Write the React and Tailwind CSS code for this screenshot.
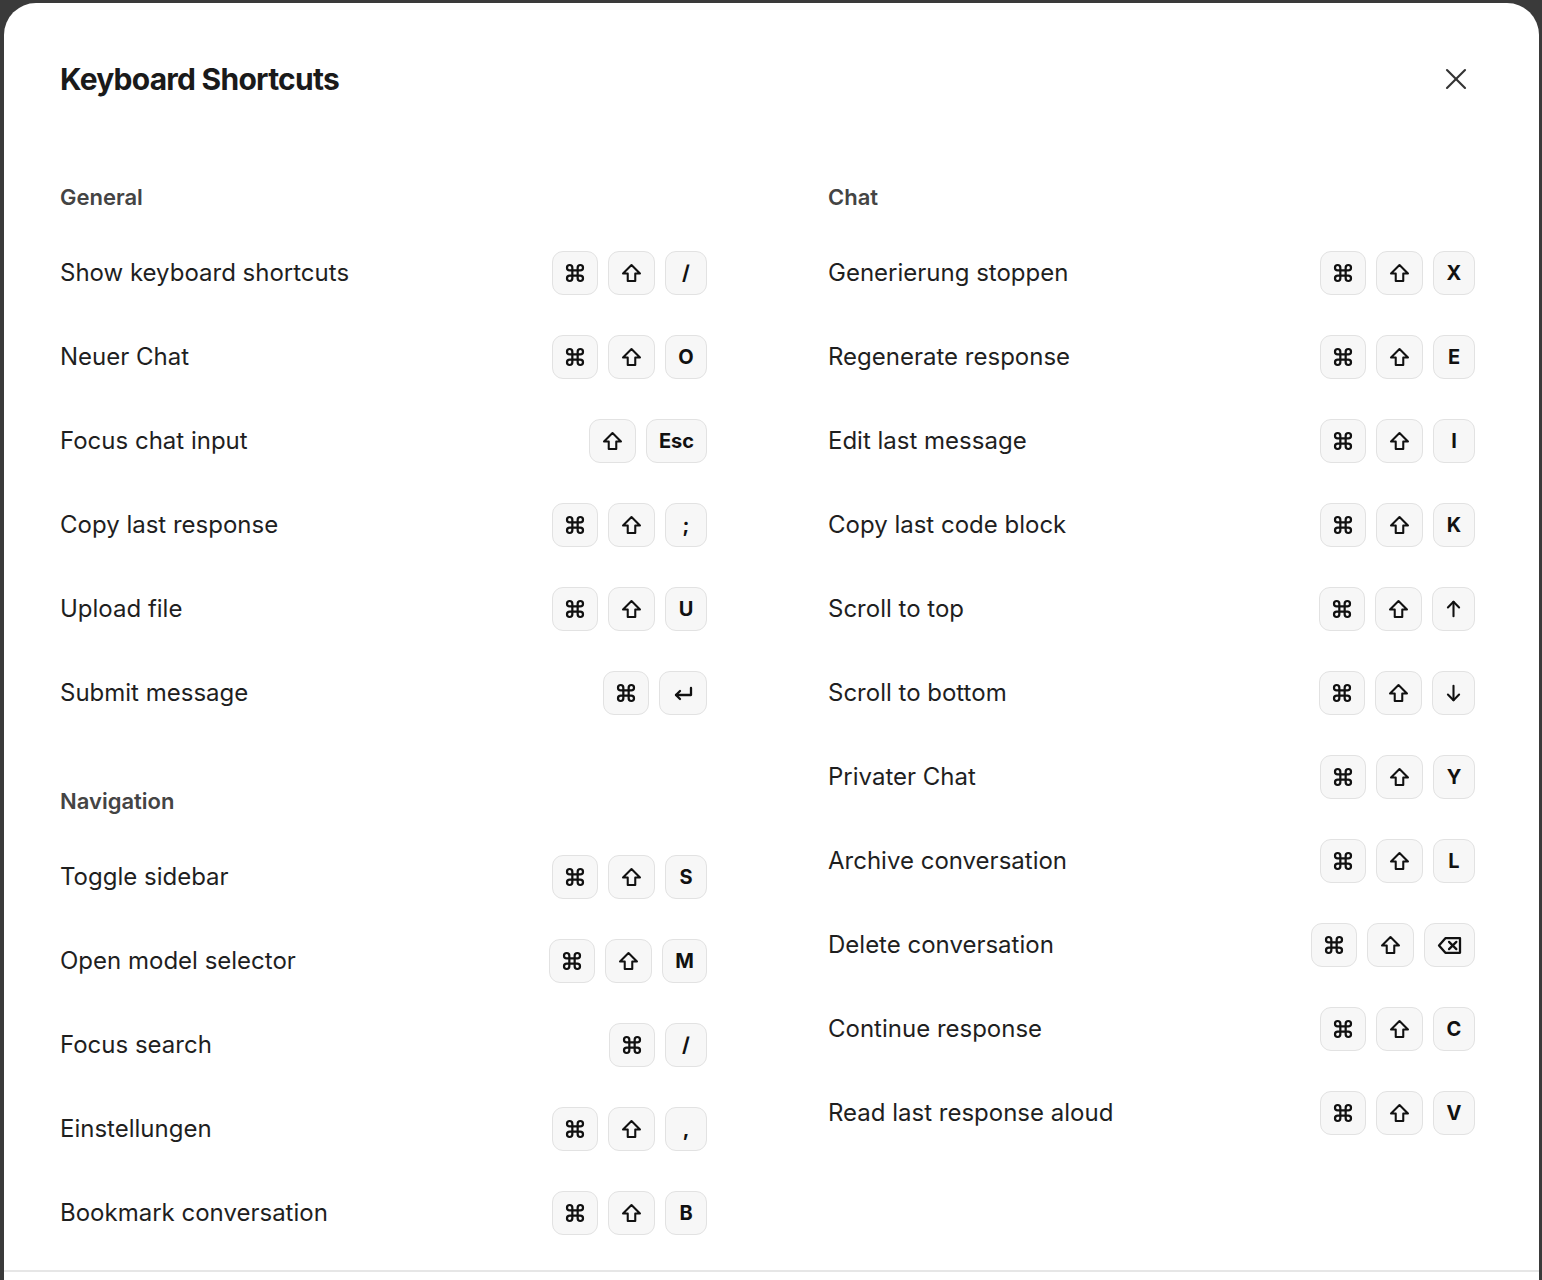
import { X } from 'lucide-react';

const CMD = 'cmd';
const SHIFT = 'shift';

const general = [
  ['Show keyboard shortcuts', [CMD, SHIFT, '/']],
  ['Neuer Chat', [CMD, SHIFT, 'O']],
  ['Focus chat input', [SHIFT, 'Esc']],
  ['Copy last response', [CMD, SHIFT, ';']],
  ['Upload file', [CMD, SHIFT, 'U']],
  ['Submit message', [CMD, 'enter']],
];

const navigation = [
  ['Toggle sidebar', [CMD, SHIFT, 'S']],
  ['Open model selector', [CMD, SHIFT, 'M']],
  ['Focus search', [CMD, '/']],
  ['Einstellungen', [CMD, SHIFT, ',']],
  ['Bookmark conversation', [CMD, SHIFT, 'B']],
];

const chat = [
  ['Generierung stoppen', [CMD, SHIFT, 'X']],
  ['Regenerate response', [CMD, SHIFT, 'E']],
  ['Edit last message', [CMD, SHIFT, 'I']],
  ['Copy last code block', [CMD, SHIFT, 'K']],
  ['Scroll to top', [CMD, SHIFT, 'up']],
  ['Scroll to bottom', [CMD, SHIFT, 'down']],
  ['Privater Chat', [CMD, SHIFT, 'Y']],
  ['Archive conversation', [CMD, SHIFT, 'L']],
  ['Delete conversation', [CMD, SHIFT, 'backspace']],
  ['Continue response', [CMD, SHIFT, 'C']],
  ['Read last response aloud', [CMD, SHIFT, 'V']],
];

const stroke = {
  fill: 'none',
  stroke: '#111',
  strokeLinecap: 'round',
  strokeLinejoin: 'round',
  overflow: 'visible',
};

// drawn modifier / special key glyphs
const glyphs = {
  cmd: (
    <svg width="16" height="16" viewBox="3 3 18 18" {...stroke} strokeWidth={2.5}>
      <path d="M9 6v12a3 3 0 1 1-3-3h12a3 3 0 1 1-3 3V6a3 3 0 1 1 3 3H6a3 3 0 1 1 3-3z" />
    </svg>
  ),
  shift: (
    <svg width="17" height="16" viewBox="3 3 18 17" {...stroke} strokeWidth={2.2}>
      <path d="M12 3 3 12h5v8h8v-8h5z" />
    </svg>
  ),
  enter: (
    <svg width="18" height="13" viewBox="3 5 18 13" {...stroke} strokeWidth={2.3}>
      <path d="M20 6v7H5" />
      <path d="m9 9-4 4 4 4" />
    </svg>
  ),
  up: (
    <svg width="13" height="16" viewBox="2 2 16 20" {...stroke} strokeWidth={2.6}>
      <path d="M10 21V3" />
      <path d="m3 10 7-7 7 7" />
    </svg>
  ),
  down: (
    <svg width="13" height="16" viewBox="2 2 16 20" {...stroke} strokeWidth={2.6}>
      <path d="M10 3v18" />
      <path d="m3 14 7 7 7-7" />
    </svg>
  ),
  backspace: (
    <svg width="21" height="15" viewBox="2 2 23 16" {...stroke} strokeWidth={2.5}>
      <path d="M9 2h16v16H9L2 10z" />
      <path d="m13 6 8 8M21 6l-8 8" />
    </svg>
  ),
};

function Key({ k }) {
  const glyph = glyphs[k];
  return (
    <kbd
      className={`flex h-[44px] min-w-[42px] items-center justify-center rounded-[11px] border-[1.5px] border-[#e2e2e2] bg-[#f7f7f7] font-[Inter,sans-serif] text-[#111] ${
        glyph ? 'px-[14px]' : 'px-[12px]'
      }`}
    >
      {glyph || <span className="text-[20px] leading-none font-bold">{k}</span>}
    </kbd>
  );
}

function Row({ label, keys }) {
  return (
    <div className="flex h-[84px] items-center justify-between">
      <span className="text-[24px] text-[#1f1f1f]">{label}</span>
      <div className="flex gap-[10px]">
        {keys.map((k, i) => (
          <Key key={i} k={k} />
        ))}
      </div>
    </div>
  );
}

function Section({ title, items }) {
  return (
    <section>
      <h3 className="mb-[20px] h-[28px] text-[22px] leading-[28px] font-semibold text-[#444]">{title}</h3>
      {items.map(([label, keys]) => (
        <Row key={label} label={label} keys={keys} />
      ))}
    </section>
  );
}

export default function App() {
  return (
    <div className="h-[1280px] overflow-hidden bg-[#3a3a3a] pt-[3px] pr-[3px] pl-[4px] font-[Inter,sans-serif]">
      <div className="flex h-[1300px] flex-col rounded-t-[32px] bg-white">
        <header className="flex items-center justify-between pt-[56px] pr-[65px] pl-[56px]">
          <h2 className="text-[30px] leading-[40px] font-bold tracking-tight text-[#1a1a1a]">Keyboard Shortcuts</h2>
          <button className="text-[#333]">
            <X size={36} strokeWidth={1.4} />
          </button>
        </header>

        <div className="grid h-[1171px] grid-cols-2 gap-x-[121px] pt-[84px] pr-[64px] pl-[56px]">
          <div className="flex flex-col gap-[52px]">
            <Section title="General" items={general} />
            <Section title="Navigation" items={navigation} />
          </div>
          <div>
            <Section title="Chat" items={chat} />
          </div>
        </div>

        <div className="border-t-2 border-[#e6e6e6]" />
      </div>
    </div>
  );
}
